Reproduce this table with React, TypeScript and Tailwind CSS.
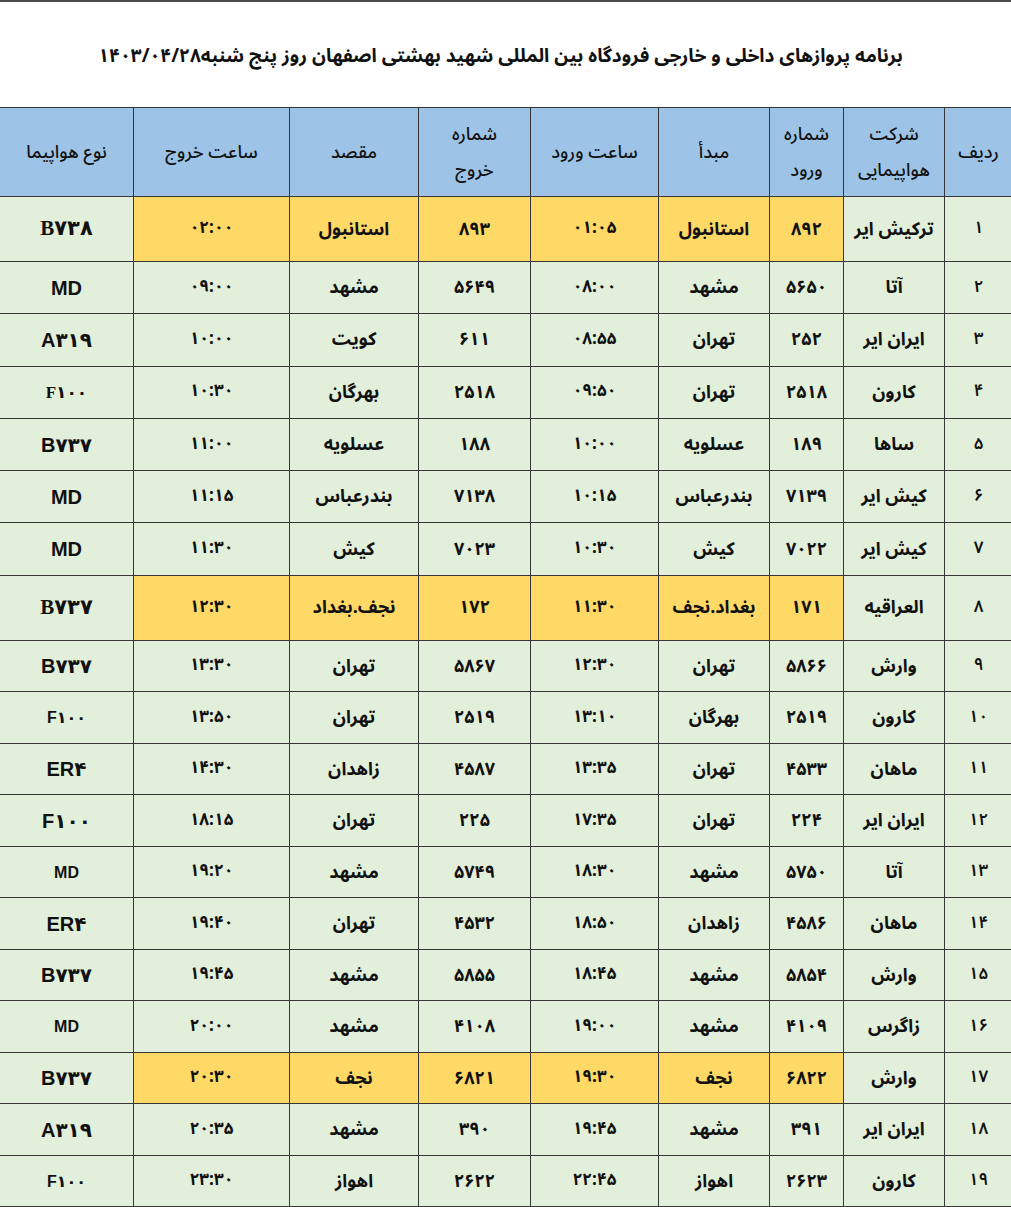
import React from 'react';

// flight schedule table, rtl
type Row = {
  n: string;
  airline: string;
  inNo: string;
  from: string;
  inTime: string;
  outNo: string;
  to: string;
  outTime: string;
  type: string;
  typeCls?: string;
  hl?: boolean;
  tall?: boolean;
};

const sans = 'font-["Liberation_Sans","DejaVu_Sans",sans-serif]';

const rows: Row[] = [
  { n: '۱', airline: 'ترکیش ایر', inNo: '۸۹۲', from: 'استانبول', inTime: '۰۱:۰۵', outNo: '۸۹۳', to: 'استانبول', outTime: '۰۲:۰۰', type: 'B۷۳۸', typeCls: 'serif', hl: true, tall: true },
  { n: '۲', airline: 'آتا', inNo: '۵۶۵۰', from: 'مشهد', inTime: '۰۸:۰۰', outNo: '۵۶۴۹', to: 'مشهد', outTime: '۰۹:۰۰', type: 'MD' },
  { n: '۳', airline: 'ایران ایر', inNo: '۲۵۲', from: 'تهران', inTime: '۰۸:۵۵', outNo: '۶۱۱', to: 'کویت', outTime: '۱۰:۰۰', type: 'A۳۱۹' },
  { n: '۴', airline: 'کارون', inNo: '۲۵۱۸', from: 'تهران', inTime: '۰۹:۵۰', outNo: '۲۵۱۸', to: 'بهرگان', outTime: '۱۰:۳۰', type: 'F۱۰۰', typeCls: 'serifSm' },
  { n: '۵', airline: 'ساها', inNo: '۱۸۹', from: 'عسلویه', inTime: '۱۰:۰۰', outNo: '۱۸۸', to: 'عسلویه', outTime: '۱۱:۰۰', type: 'B۷۳۷' },
  { n: '۶', airline: 'کیش ایر', inNo: '۷۱۳۹', from: 'بندرعباس', inTime: '۱۰:۱۵', outNo: '۷۱۳۸', to: 'بندرعباس', outTime: '۱۱:۱۵', type: 'MD' },
  { n: '۷', airline: 'کیش ایر', inNo: '۷۰۲۲', from: 'کیش', inTime: '۱۰:۳۰', outNo: '۷۰۲۳', to: 'کیش', outTime: '۱۱:۳۰', type: 'MD' },
  { n: '۸', airline: 'العراقیه', inNo: '۱۷۱', from: 'بغداد.نجف', inTime: '۱۱:۳۰', outNo: '۱۷۲', to: 'نجف.بغداد', outTime: '۱۲:۳۰', type: 'B۷۳۷', typeCls: 'serif', hl: true, tall: true },
  { n: '۹', airline: 'وارش', inNo: '۵۸۶۶', from: 'تهران', inTime: '۱۲:۳۰', outNo: '۵۸۶۷', to: 'تهران', outTime: '۱۳:۳۰', type: 'B۷۳۷' },
  { n: '۱۰', airline: 'کارون', inNo: '۲۵۱۹', from: 'بهرگان', inTime: '۱۳:۱۰', outNo: '۲۵۱۹', to: 'تهران', outTime: '۱۳:۵۰', type: 'F۱۰۰', typeCls: 'sm' },
  { n: '۱۱', airline: 'ماهان', inNo: '۴۵۳۳', from: 'تهران', inTime: '۱۳:۳۵', outNo: '۴۵۸۷', to: 'زاهدان', outTime: '۱۴:۳۰', type: 'ER۴' },
  { n: '۱۲', airline: 'ایران ایر', inNo: '۲۲۴', from: 'تهران', inTime: '۱۷:۳۵', outNo: '۲۲۵', to: 'تهران', outTime: '۱۸:۱۵', type: 'F۱۰۰' },
  { n: '۱۳', airline: 'آتا', inNo: '۵۷۵۰', from: 'مشهد', inTime: '۱۸:۳۰', outNo: '۵۷۴۹', to: 'مشهد', outTime: '۱۹:۲۰', type: 'MD', typeCls: 'sm' },
  { n: '۱۴', airline: 'ماهان', inNo: '۴۵۸۶', from: 'زاهدان', inTime: '۱۸:۵۰', outNo: '۴۵۳۲', to: 'تهران', outTime: '۱۹:۴۰', type: 'ER۴' },
  { n: '۱۵', airline: 'وارش', inNo: '۵۸۵۴', from: 'مشهد', inTime: '۱۸:۴۵', outNo: '۵۸۵۵', to: 'مشهد', outTime: '۱۹:۴۵', type: 'B۷۳۷' },
  { n: '۱۶', airline: 'زاگرس', inNo: '۴۱۰۹', from: 'مشهد', inTime: '۱۹:۰۰', outNo: '۴۱۰۸', to: 'مشهد', outTime: '۲۰:۰۰', type: 'MD', typeCls: 'sm' },
  { n: '۱۷', airline: 'وارش', inNo: '۶۸۲۲', from: 'نجف', inTime: '۱۹:۳۰', outNo: '۶۸۲۱', to: 'نجف', outTime: '۲۰:۳۰', type: 'B۷۳۷', hl: true },
  { n: '۱۸', airline: 'ایران ایر', inNo: '۳۹۱', from: 'مشهد', inTime: '۱۹:۴۵', outNo: '۳۹۰', to: 'مشهد', outTime: '۲۰:۳۵', type: 'A۳۱۹' },
  { n: '۱۹', airline: 'کارون', inNo: '۲۶۲۳', from: 'اهواز', inTime: '۲۲:۴۵', outNo: '۲۶۲۲', to: 'اهواز', outTime: '۲۳:۳۰', type: 'F۱۰۰', typeCls: 'sm' },
];

function typeClass(c?: string) {
  if (c === 'serif') return 'font-["Liberation_Serif","DejaVu_Sans",serif] text-[21px]';
  if (c === 'serifSm') return 'font-["Liberation_Serif","DejaVu_Sans",serif] text-[17px]';
  if (c === 'sm') return sans + ' text-[16px]';
  return sans + ' text-[20px]';
}

const td = 'border border-[#363636] text-center align-middle p-0';

export default function App() {
  return (
    <div dir="rtl" className='w-[1011px] h-[1207px] overflow-hidden bg-white font-["Noto_Sans_Arabic","DejaVu_Sans",sans-serif] text-[#111]'>
      <div className="h-[2px] bg-[#4a4a4a]" />
      <div className="h-[105px] flex items-center justify-center pt-[4px] pr-[10px]">
        <h1 className="text-[19px] font-bold tracking-tight">
          برنامه پروازهای داخلی و خارجی فرودگاه بین المللی شهید بهشتی اصفهان روز پنج شنبه۱۴۰۳/۰۴/۲۸
        </h1>
      </div>
      <table className="border-collapse table-fixed w-[1013px] -mr-[2px] ml-[2px]">
        <colgroup>
          <col className="w-[68px]" />
          <col className="w-[101px]" />
          <col className="w-[74px]" />
          <col className="w-[111px]" />
          <col className="w-[128px]" />
          <col className="w-[112px]" />
          <col className="w-[129px]" />
          <col className="w-[156px]" />
          <col className="w-[134px]" />
        </colgroup>
        <thead>
          <tr className="h-[89px] bg-[#9dc3e6] text-[18px] leading-[36px]">
            <th className={td + ' font-medium'}>ردیف</th>
            <th className={td + ' font-medium'}>شرکت<br />هواپیمایی</th>
            <th className={td + ' font-medium'}>شماره<br />ورود</th>
            <th className={td + ' font-medium'}>مبدأ</th>
            <th className={td + ' font-medium'}>ساعت ورود</th>
            <th className={td + ' font-medium'}>شماره<br />خروج</th>
            <th className={td + ' font-medium'}>مقصد</th>
            <th className={td + ' font-medium'}>ساعت خروج</th>
            <th className={td + ' font-medium'}>نوع هواپیما</th>
          </tr>
        </thead>
        <tbody className="bg-[#e2efda] text-[18px] font-bold">
          {rows.map((r, i) => {
            const y = r.hl ? ' bg-[#ffd966]' : '';
            const h = r.tall ? 'h-[65px]' : i < 8 ? 'h-[52.3px]' : 'h-[51.5px]';
            return (
              <tr key={r.n} className={h}>
                <td className={td + ' font-semibold text-[17px]'}>{r.n}</td>
                <td className={td}>{r.airline}</td>
                <td className={td + y}>{r.inNo}</td>
                <td className={td + y}>{r.from}</td>
                <td className={td + y + ' text-[17px]'}>{r.inTime}</td>
                <td className={td + y}>{r.outNo}</td>
                <td className={td + y}>{r.to}</td>
                <td className={td + y + ' text-[17px]'}>{r.outTime}</td>
                <td className={td}>
                  <span dir="ltr" className={typeClass(r.typeCls)}>{r.type}</span>
                </td>
              </tr>
            );
          })}
        </tbody>
      </table>
    </div>
  );
}
